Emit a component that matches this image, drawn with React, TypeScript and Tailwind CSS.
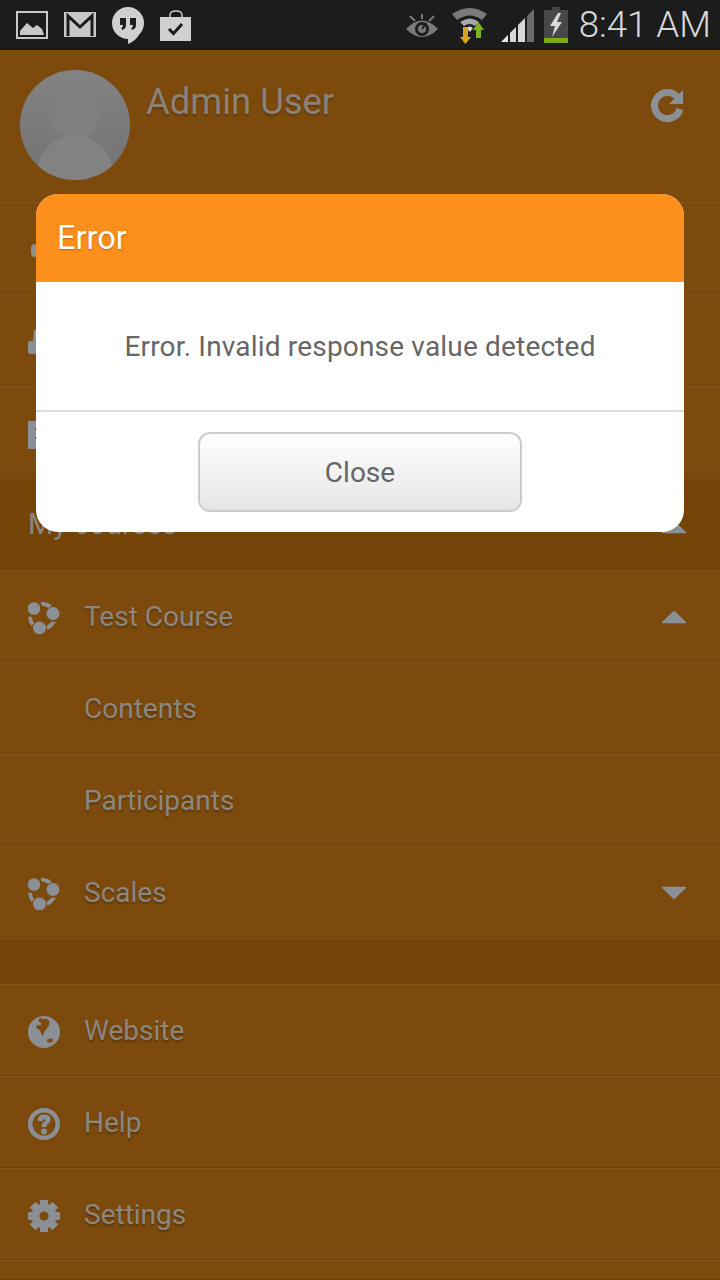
import React from "react";

const textCls = "text-[#8b8780] text-[28px] leading-none [text-shadow:0_2px_2px_rgba(50,30,0,0.45)]";

const Cluster = () => (
  <svg width="32" height="32" viewBox="0 0 32 32" fill="#8a9096">
    <circle cx="6" cy="6.500" r="6.300" />
    <circle cx="25" cy="11.500" r="6.500" />
    <circle cx="11.500" cy="26" r="6.500" />
    <path d="M13 0 Q19 -0.500 24 3.500 L20.500 6 Q17 3.500 13.500 3.500Z" />
    <path d="M0.500 14.500 L4 15 Q4 18 6 21.500 L3.500 24 Q-0.500 19 0.500 14.500Z" />
    <path d="M19.500 28 Q25 25 28 20 L23.500 19.500 Q21 22.500 18.500 24 Z" />
  </svg>
);

const Globe = () => (
  <svg width="32" height="32" viewBox="0 0 32 32">
    <circle cx="16" cy="16" r="16" fill="#8a9096" />
    <path d="M12 1.500 Q15 4 18 2.500 Q22 4 21.500 8 Q20 12 17 14.500 Q15.500 17 15 20 Q12.500 18 12 14 Q8.500 13 8 10 Q10.500 8.500 12.500 9.500 Q14.500 7 11 6 Q10 4 12 1.500Z" fill="#7d4a0d" />
    <path d="M18.500 25 Q21 21.500 24.500 23 Q26 25 23 26.500 Q20 27 18.500 25Z" fill="#7d4a0d" />
  </svg>
);

const Help = () => (
  <svg width="32" height="32" viewBox="0 0 32 32">
    <circle cx="16" cy="16" r="13.750" fill="none" stroke="#8a9096" strokeWidth="4.500" />
    <path d="M9.500 12.500 Q10 6.500 16 6.500 Q22.500 6.500 22.500 11.500 Q22.500 14.500 19.500 16 Q18.500 16.800 18.500 19 L13.500 19 Q13.500 15 16.500 13.500 Q17.500 13 17.200 12 Q16.500 10.800 15.500 11.200 Q14.500 11.500 14.500 13.500Z" fill="#8a9096" />
    <circle cx="16" cy="23.500" r="3" fill="#8a9096" />
  </svg>
);

const Gear = () => (
  <svg width="32" height="32" viewBox="0 0 32 32">
    <g fill="#8a9096">
      <circle cx="16" cy="16" r="12.500" />
      {[0, 45, 90, 135, 180, 225, 270, 315].map((a) => (
        <rect key={a} x="12" y="0" width="8" height="7" rx="1" transform={`rotate(${a} 16 16)`} />
      ))}
    </g>
    <circle cx="16" cy="16" r="4.500" fill="#7d4a0d" />
  </svg>
);

const Caret = ({ down }: { down?: boolean }) => (
  <svg width="26" height="14" viewBox="0 0 26 14" fill="#8a9096" className={down ? "rotate-180" : ""}>
    <path d="M13 1.500 L24.500 12.500 L1.500 12.500Z" stroke="#8a9096" strokeWidth="1.500" strokeLinejoin="round" />
  </svg>
);

const Row = ({ icon, label, right, dark, h = "h-[92px]" }: { icon?: React.ReactNode; label?: string; right?: React.ReactNode; dark?: boolean; h?: string }) => (
  <div className={`${h} shrink-0 flex items-center pt-[2px] pl-[28px] pr-[33px] border-t border-t-[#86551b] border-b border-b-[#70420a] ${dark ? "bg-[#744409]" : "bg-[#7d4a0d]"}`}>
    <div className="w-[56px] shrink-0 flex items-center pt-[2px]">{icon}</div>
    {label && <span className={textCls}>{label}</span>}
    {right && <div className="ml-auto flex items-center">{right}</div>}
  </div>
);

const StatusBar = () => (
  <div className="h-[50px] shrink-0 bg-[#1c1c1c] flex items-center pl-[16px] pr-[9px]">
    <svg width="32" height="28" viewBox="0 0 32 28" className="mr-[16px]">
      <rect x="1" y="1" width="30" height="26" fill="none" stroke="#c8c8c8" strokeWidth="2" />
      <path d="M4 24 L4 20 L11 12 L17 17 L21 14 L26 18 L28 24Z" fill="#c8c8c8" />
    </svg>
    <svg width="32" height="26" viewBox="0 0 32 26" className="mr-[16px]">
      <rect x="0" y="0" width="32" height="25" fill="#c8c8c8" />
      <path d="M4 24 L4 4 L16 15 L28 4 L28 24" fill="none" stroke="#1c1c1c" strokeWidth="3" />
    </svg>
    <svg width="32" height="37" viewBox="0 0 32 37" className="mr-[16px]">
      <circle cx="16" cy="16" r="16" fill="#d0d0d0" />
      <path d="M16 30 L16 37 Q24 34 28 26Z" fill="#d0d0d0" />
      <path d="M8 11 H14 V18 Q14 22 10 23 L9.500 21 Q11 20 11 18 H8Z M18 11 H24 V18 Q24 22 20 23 L19.500 21 Q21 20 21 18 H18Z" fill="#1c1c1c" />
    </svg>
    <svg width="32" height="31" viewBox="0 0 32 31" className="mr-auto">
      <path d="M10 7 V5 Q10 1 16 1 Q22 1 22 5 V7" fill="none" stroke="#c8c8c8" strokeWidth="1.500" />
      <rect x="0" y="7" width="31" height="24" fill="#d0d0d0" />
      <path d="M9 19 L13.500 23.500 L22 14" fill="none" stroke="#1c1c1c" strokeWidth="3" />
    </svg>
    <svg width="32" height="25" viewBox="0 0 32 25" className="mr-[14px]">
      <g stroke="#7a7a7a" strokeWidth="2" fill="none">
        <path d="M16 1 V6 M4 3 L9 8 M28 3 L23 8" />
      </g>
      <path d="M0 16 Q16 -1 32 16 Q16 32 0 16Z" fill="#7a7a7a" />
      <circle cx="16" cy="16" r="7" fill="#1c1c1c" />
      <circle cx="16" cy="16" r="4" fill="#7a7a7a" />
      <path d="M16 16 L20 10" stroke="#1c1c1c" strokeWidth="2" />
    </svg>
    <svg width="36" height="37" viewBox="0 0 36 37" className="mr-[13px]">
      <path d="M0 7 Q18 -5 35 7 L30 13 Q18 4 5 13Z" fill="#7a7a7a" />
      <path d="M8 15 Q18 8 27 15 L23 19 Q18 15 12 19Z" fill="#a8a8a8" />
      <path d="M14 21 Q18 18 21 21 L18 25Z" fill="#d8d8d8" />
      <path d="M11 20 H16 V30 H19 L13.500 37 L8 30 H11Z" fill="#d8a517" />
      <path d="M24 22 H29 V31 H24Z M26.500 15 L32 23 H21Z" fill="#7cb518" />
    </svg>
    <svg width="33" height="33" viewBox="0 0 33 33" className="mr-[10px]">
      <path d="M0 33 L7 26 V33Z" fill="#e8e8e8" />
      <path d="M9 24 L15 18 V33 H9Z" fill="#d8d8d8" />
      <path d="M17 16 L24 9 V33 H17Z" fill="#d8d8d8" />
      <path d="M26 7 L33 0 V33 H26Z" fill="#6c6c6c" />
    </svg>
    <svg width="24" height="36" viewBox="0 0 24 36" className="mr-[11px]">
      <rect x="8" y="0" width="8" height="4" fill="#444" />
      <rect x="0" y="3" width="24" height="28" fill="#484848" />
      <rect x="0" y="31" width="24" height="5" fill="#7fae14" />
      <path d="M14 6 L6 19 H11 L8 30 L18 15 H13 L17 6Z" fill="#d8d8d8" />
    </svg>
    <span className="font-['Roboto',sans-serif] font-light text-[36.7px] leading-none text-[#d8d8d8] whitespace-nowrap">8:41 AM</span>
  </div>
);

export default function App() {
  return (
    <div className="relative w-[720px] h-[1280px] overflow-hidden bg-[#7d4a0d] flex flex-col font-['Roboto',sans-serif]">
      <StatusBar />
      <div className="h-[152px] shrink-0 flex items-start pl-[20px] pr-[35px] pt-[20px] bg-[#7d4a0d]">
        <div className="relative w-[110px] h-[110px] rounded-full overflow-hidden bg-gradient-to-b from-[#838383] to-[#727272] shrink-0">
          <div className="absolute left-[30px] top-[20px] w-[50px] h-[50px] rounded-full bg-[#7f7f7f]" />
          <div className="absolute left-[17px] top-[65px] w-[76px] h-[76px] rounded-full bg-[#828282]" />
        </div>
        <span className="ml-[16px] mt-[11px] text-[36.4px] leading-[42px] text-[#8a8276] [text-shadow:0_2px_2px_rgba(50,30,0,0.35)]">Admin User</span>
        <svg width="34" height="34" viewBox="0 0 34 34" className="ml-auto mt-[19px]">
          <path d="M27 9 A13 13 0 1 0 29 20" fill="none" stroke="#8a9096" strokeWidth="7" />
          <path d="M32 1 V15 H18Z" fill="#8a9096" />
        </svg>
      </div>
      <Row icon={<div className="ml-[3px] w-[8px] h-[13px] rounded-sm bg-[#8a9096]" />} />
      <Row icon={<svg width="10" height="24" viewBox="0 0 10 24" fill="#8a9096"><path d="M6 0 L10 0 V24 H2 Q0 24 0 22 V13 Q0 11 2 11 H5Z" /></svg>} />
      <Row icon={<svg width="10" height="30" viewBox="0 0 10 30" fill="#8a9096"><path d="M1 2 H10 V9 H7 V11 H10 V18 H7 V20 H10 V30 H1 Q0 30 0 29 V3 Q0 2 1 2Z" /></svg>} />
      <div className="h-[92px] shrink-0 flex items-end pl-[28px] pr-[33px] pb-[29px] border-t border-t-[#7f4f15] border-b border-b-[#6a3e07] bg-[#744409]">
        <span className="text-[29px] leading-[32px] text-[#8b8780]">My courses</span>
        <div className="ml-auto mb-[6px]"><Caret /></div>
      </div>
      <Row icon={<Cluster />} label="Test Course" right={<Caret />} />
      <Row label="Contents" />
      <Row label="Participants" />
      <Row icon={<Cluster />} label="Scales" right={<Caret down />} />
      <Row dark h="h-[46px]" />
      <Row icon={<Globe />} label="Website" />
      <Row icon={<Help />} label="Help" />
      <Row icon={<Gear />} label="Settings" />
      <Row h="h-[20px]" />

      <div className="absolute left-[36px] top-[194px] w-[648px] h-[338px] rounded-[22px] overflow-hidden bg-white flex flex-col">
        <div className="h-[88px] shrink-0 bg-[#fd901c] flex items-center pl-[21px] text-white text-[32.5px] leading-none [text-shadow:0_1px_2px_rgba(120,60,0,0.5)]">Error</div>
        <div className="h-[128px] shrink-0 flex items-center justify-center pt-[1px] text-[#666666] text-[28px] tracking-[0.18px] leading-none">Error. Invalid response value detected</div>
        <div className="h-[2px] shrink-0 bg-[#dddddd]" />
        <div className="flex-1 flex items-start justify-center pt-[20px]">
          <button className="w-[324px] h-[80px] pt-[2px] rounded-[12px] border-2 border-[#cccccc] bg-gradient-to-b from-[#ffffff] to-[#e6e6e6] text-[#666666] text-[28px] leading-none">Close</button>
        </div>
      </div>
    </div>
  );
}
